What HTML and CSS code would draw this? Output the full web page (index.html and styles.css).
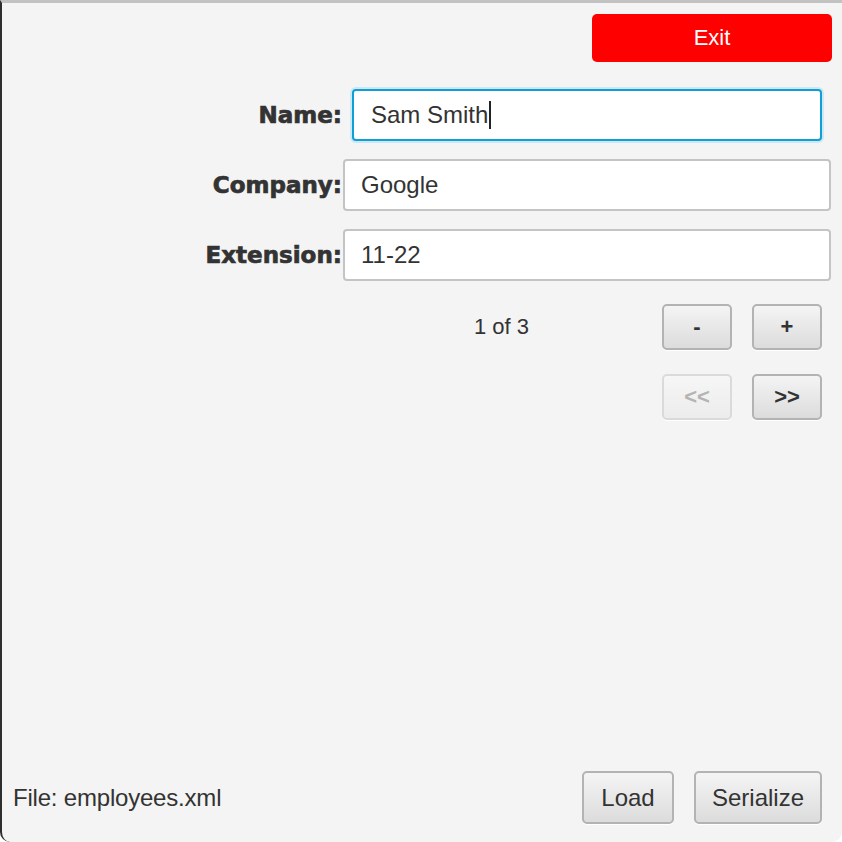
FILE: index.html
```html
<!DOCTYPE html>
<html lang="en">
<head>
  <meta charset="UTF-8">
  <title>Employees</title>
  <link rel="stylesheet" href="styles.css">
</head>
<body>
  <div class="window">
    <div class="top-bar">
      <button class="btn-exit">Exit</button>
    </div>

    <div class="form">
      <label class="form-label">Name:</label>
      <div class="field field-focused">Sam Smith<span class="caret"></span></div>

      <label class="form-label">Company:</label>
      <div class="field">Google</div>

      <label class="form-label">Extension:</label>
      <div class="field">11-22</div>
    </div>

    <div class="pager">
      <div class="pager-row">
        <span class="pager-count">1 of 3</span>
        <button class="btn btn-small">-</button>
        <button class="btn btn-small">+</button>
      </div>
      <div class="pager-row">
        <button class="btn btn-small" disabled>&lt;&lt;</button>
        <button class="btn btn-small">&gt;&gt;</button>
      </div>
    </div>

    <div class="footer">
      <span class="file-name">File: employees.xml</span>
      <div class="footer-actions">
        <button class="btn btn-large btn-load">Load</button>
        <button class="btn btn-large btn-serialize">Serialize</button>
      </div>
    </div>
  </div>
</body>
</html>
```

FILE: styles.css
```css
html, body { margin:0; padding:0; background:#ffffff; }
body { font-family:'Liberation Sans', Arial, sans-serif; color:#333; }

.window { box-sizing:border-box; width:842px; height:842px; background:#f4f4f4; border-top:3px solid #c2c2c2; border-left:2px solid #2e2e2e; border-bottom-left-radius:10px; border-bottom-right-radius:10px; display:flex; flex-direction:column; }

.top-bar { display:flex; justify-content:flex-end; padding:11px 10px 0 0; }
.btn-exit { width:240px; height:48px; border:none; border-radius:5px; background:#ff0000; color:#fff; font-family:'Liberation Sans', Arial, sans-serif; font-size:22px; padding:0; }

.form { display:grid; grid-template-columns:341px 1fr; row-gap:18px; margin-top:27px; padding-right:11px; }
.form-label { display:flex; align-items:center; justify-content:flex-end; padding-right:1px; font-family:'DejaVu Sans', sans-serif; font-weight:bold; font-size:23px; color:#333; -webkit-text-stroke:0.7px #333; }
.field { box-sizing:border-box; height:52px; background:#fff; border:2px solid #c4c4c4; border-radius:4px; padding:0 16px; display:flex; align-items:center; font-size:24px; color:#333; }
.field-focused { margin:0 9px; border-color:#0d9fd6; box-shadow:0 0 0 2px #cbe8f4; padding-left:17px; }
.caret { display:inline-block; width:1.5px; height:28px; background:#222; margin-left:1px; }

.pager { display:flex; flex-direction:column; gap:24px; margin-top:23px; padding-right:20px; }
.pager-row { display:flex; justify-content:flex-end; align-items:center; gap:20px; }
.pager-count { font-size:22px; margin-right:113px; }

.btn { box-sizing:border-box; border:2px solid #b3b3b3; border-radius:5px; background:linear-gradient(#f4f4f4, #dcdcdc); box-shadow:0 1px 0 #ffffff; color:#333; font-family:'Liberation Sans', Arial, sans-serif; padding:0; }
.btn-small { width:70px; height:46px; font-size:22px; font-weight:bold; }
.btn:disabled { border-color:#dadada; background:linear-gradient(#f6f6f6, #ececec); color:#b4b4b4; }
.btn-large { height:53px; font-size:24px; }
.btn-load { width:92px; }
.btn-serialize { width:128px; }

.footer { margin-top:auto; display:flex; justify-content:space-between; align-items:center; padding:0 20px 18px 11px; }
.file-name { font-size:24px; letter-spacing:-0.2px; }
.footer-actions { display:flex; gap:20px; }
```
